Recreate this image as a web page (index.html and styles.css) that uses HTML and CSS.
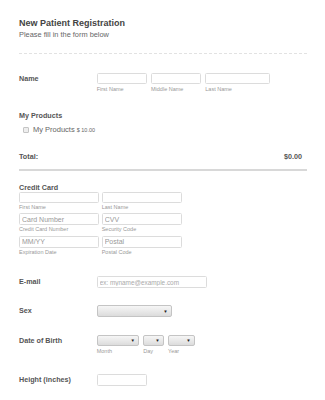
FILE: index.html
```html
<!DOCTYPE html>
<html lang="en">
<head>
    <meta charset="UTF-8">
    <meta name="viewport" content="width=device-width, initial-scale=1.0">
    <title>New Patient Registration</title>
    <link rel="stylesheet" href="styles.css">
</head>
<body>
    <div class="form-header">
        <h1>New Patient Registration</h1>
        <p>Please fill in the form below</p>
    </div>

    <div class="row row-name">
        <label class="row-label">Name</label>
        <div class="fields">
            <div class="field">
                <input type="text" class="input w50">
                <span class="sublabel">First Name</span>
            </div>
            <div class="field">
                <input type="text" class="input w50">
                <span class="sublabel">Middle Name</span>
            </div>
            <div class="field">
                <input type="text" class="input w65">
                <span class="sublabel">Last Name</span>
            </div>
        </div>
    </div>

    <div class="products">
        <div class="section-title">My Products</div>
        <div class="product">
            <span class="checkbox"></span>
            <span class="product-name">My Products</span>
            <span class="product-price">$ 10.00</span>
        </div>
    </div>

    <div class="total">
        <span>Total:</span>
        <span>$0.00</span>
    </div>

    <div class="card">
        <div class="section-title card-title">Credit Card</div>
        <div class="card-grid">
            <div class="field">
                <input type="text" class="input w80">
                <span class="sublabel">First Name</span>
            </div>
            <div class="field">
                <input type="text" class="input w80">
                <span class="sublabel">Last Name</span>
            </div>
            <div class="field">
                <input type="text" class="input w80 big" placeholder="Card Number">
                <span class="sublabel">Credit Card Number</span>
            </div>
            <div class="field">
                <input type="text" class="input w80 big" placeholder="CVV">
                <span class="sublabel">Security Code</span>
            </div>
            <div class="field">
                <input type="text" class="input w80 big" placeholder="MM/YY">
                <span class="sublabel">Expiration Date</span>
            </div>
            <div class="field">
                <input type="text" class="input w80 big" placeholder="Postal">
                <span class="sublabel">Postal Code</span>
            </div>
        </div>
    </div>

    <div class="row row-email">
        <label class="row-label tall">E-mail</label>
        <input type="text" class="input tall w110" placeholder="ex: myname@example.com">
    </div>

    <div class="row row-sex">
        <label class="row-label tall">Sex</label>
        <div class="select tall w75"><span class="arrow">&#9660;</span></div>
    </div>

    <div class="row row-dob">
        <label class="row-label">Date of Birth</label>
        <div class="fields">
            <div class="field">
                <div class="select w42"><span class="arrow">&#9660;</span></div>
                <span class="sublabel">Month</span>
            </div>
            <div class="field">
                <div class="select w20"><span class="arrow">&#9660;</span></div>
                <span class="sublabel">Day</span>
            </div>
            <div class="field">
                <div class="select w27"><span class="arrow">&#9660;</span></div>
                <span class="sublabel">Year</span>
            </div>
        </div>
    </div>

    <div class="row row-height">
        <label class="row-label tall">Height (inches)</label>
        <input type="text" class="input tall w50">
    </div>
</body>
</html>
```

FILE: styles.css
```css
body {
    margin: 0;
    padding: 18px 0 0 19px;
    width: 288px;
    font-family: 'Liberation Sans', Arial, sans-serif;
    color: #555;
    background: #fff;
}

.form-header {
    padding-bottom: 13px;
    border-bottom: 1px dashed #e2e2e2;
}

.form-header h1 {
    margin: 0;
    font-size: 9px;
    line-height: 11px;
    font-weight: bold;
    color: #444;
}

.form-header p {
    margin: 0;
    font-size: 7.4px;
    line-height: 11px;
    color: #666;
}

.row {
    display: flex;
    align-items: flex-start;
}

.row-label {
    width: 77.7px;
    flex-shrink: 0;
    font-size: 7.2px;
    line-height: 11px;
    font-weight: bold;
    color: #555;
}

.row-label.tall {
    line-height: 12px;
}

.fields {
    display: flex;
    gap: 4.3px;
}

.field {
    display: flex;
    flex-direction: column;
}

.input {
    box-sizing: border-box;
    height: 11px;
    margin: 0;
    padding: 0 2px;
    border: 1px solid #dcdcdc;
    border-radius: 1.5px;
    background: #fff;
    font-family: inherit;
    font-size: 7px;
    color: #555;
    outline: none;
}

.input.tall,
.input.big {
    height: 12px;
}

.input::placeholder {
    color: #999;
}

.row-email .input {
    font-size: 6.4px;
}

.row-email .input::placeholder {
    color: #aaa;
}

.w20 { width: 20.4px; }
.w27 { width: 26.7px; }
.w42 { width: 42.3px; }
.w50 { width: 50px; }
.w65 { width: 65px; }
.w75 { width: 75px; }
.w80 { width: 80px; }
.w110 { width: 110px; }

.sublabel {
    margin-top: 1px;
    font-size: 5.5px;
    line-height: 8px;
    color: #999;
}

.row-name {
    margin-top: 19px;
}

.section-title {
    font-size: 7.2px;
    line-height: 11px;
    font-weight: bold;
    color: #555;
}

.products {
    margin-top: 17px;
}

.product {
    display: flex;
    align-items: center;
    margin-top: 3px;
    padding-left: 4px;
    height: 11px;
}

.checkbox {
    box-sizing: border-box;
    width: 6px;
    height: 6px;
    margin-right: 4px;
    border: 1px solid #c4c4c4;
    border-radius: 1px;
    background: #eee;
}

.product-name {
    font-size: 7.5px;
    color: #666;
}

.product-price {
    margin-left: 2px;
    margin-top: 1px;
    font-size: 5.5px;
    color: #666;
}

.total {
    display: flex;
    justify-content: space-between;
    margin-top: 16px;
    padding: 0 5px 7px 0;
    border-bottom: 2px solid #d8d8d8;
    font-size: 7.2px;
    line-height: 11px;
    font-weight: bold;
    color: #555;
}

.card {
    margin-top: 11.5px;
}

.card-title {
    line-height: 9px;
}

.card-grid {
    display: grid;
    grid-template-columns: 80px 80px;
    column-gap: 2.7px;
    row-gap: 2px;
}

.card-grid .sublabel {
    line-height: 7.5px;
}

.row-email {
    margin-top: 20px;
}

.row-sex {
    margin-top: 17px;
}

.row-dob {
    margin-top: 17.5px;
}

.row-height {
    margin-top: 19px;
}

.select {
    box-sizing: border-box;
    position: relative;
    height: 11px;
    border: 1px solid #c4c4c4;
    border-radius: 2px;
    background: linear-gradient(#f6f6f6, #dcdcdc);
}

.select.tall {
    height: 12.4px;
}

.select .arrow {
    position: absolute;
    right: 3px;
    top: 50%;
    transform: translateY(-50%);
    font-size: 4.5px;
    line-height: 5px;
    color: #222;
}
```
